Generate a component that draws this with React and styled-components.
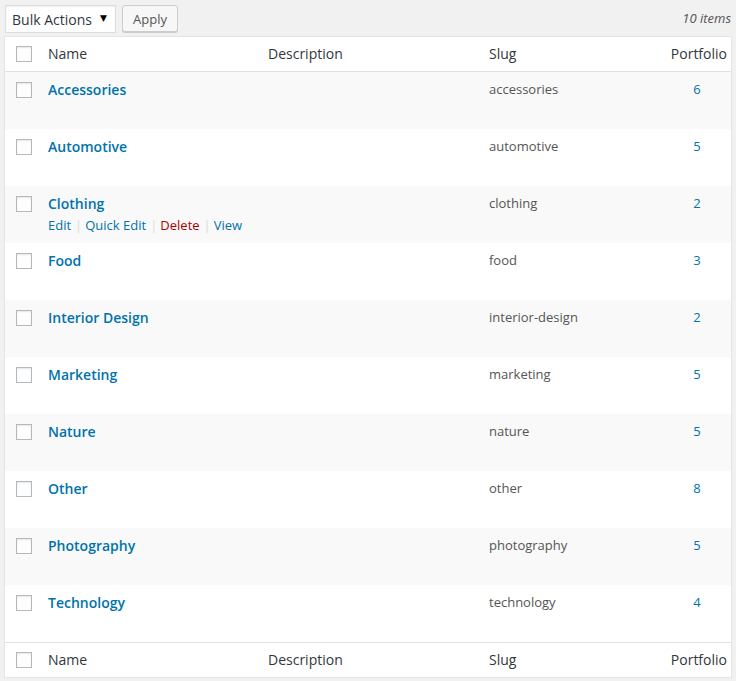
import React from 'react';
import styled, { createGlobalStyle } from 'styled-components';

const GlobalStyle = createGlobalStyle`
  html, body {
    margin: 0;
    padding: 0;
    background: #f1f1f1;
    font-family: "Open Sans", "Liberation Sans", sans-serif;
    color: #444;
  }
`;

const terms = [
  { name: 'Accessories', slug: 'accessories', count: 6 },
  { name: 'Automotive', slug: 'automotive', count: 5 },
  { name: 'Clothing', slug: 'clothing', count: 2, hover: true },
  { name: 'Food', slug: 'food', count: 3 },
  { name: 'Interior Design', slug: 'interior-design', count: 2 },
  { name: 'Marketing', slug: 'marketing', count: 5 },
  { name: 'Nature', slug: 'nature', count: 5 },
  { name: 'Other', slug: 'other', count: 8 },
  { name: 'Photography', slug: 'photography', count: 5 },
  { name: 'Technology', slug: 'technology', count: 4 },
];

const Wrap = styled.div`
  padding: 5px 4px 0 4px;
  width: 728px;
`;

const TopNav = styled.div`
  display: flex;
  align-items: flex-start;
  height: 28px;
  margin: 0 0 3px 1px;
`;

const Select = styled.div`
  box-sizing: border-box;
  width: 111px;
  height: 28px;
  padding: 0 8px 0 6px;
  background: #fff;
  border: 1px solid #ddd;
  box-shadow: inset 0 1px 2px rgba(0, 0, 0, 0.07);
  display: flex;
  align-items: center;
  justify-content: space-between;
  font-size: 14px;
  color: #32373c;
`;

const Arrow = styled.span`
  font-size: 9px;
  color: #000;
  font-family: "DejaVu Sans", sans-serif;
  margin-top: -3px;
`;

const Button = styled.div`
  box-sizing: border-box;
  margin-left: 6px;
  height: 27px;
  padding: 0 10px;
  background: #f7f7f7;
  border: 1px solid #ccc;
  border-radius: 3px;
  box-shadow: 0 1px 0 #ccc;
  display: flex;
  align-items: center;
  font-size: 13px;
  color: #555;
`;

const Count = styled.div`
  margin-left: auto;
  margin-right: 1px;
  padding-top: 4px;
  font-size: 13px;
  font-style: italic;
  color: #555;
`;

const Table = styled.div`
  background: #fff;
  border: 1px solid #e5e5e5;
  box-shadow: 0 1px 1px rgba(0, 0, 0, 0.04);
`;

const cols = '33px 220px 221px 184px 68px';

const HeadRow = styled.div`
  display: grid;
  grid-template-columns: ${cols};
  height: 34px;
  border-${p => (p.$foot ? 'top' : 'bottom')}: 1px solid #e1e1e1;
  font-size: 14px;
  color: #32373c;
`;

const HeadCell = styled.div`
  padding: 7px ${p => (p.$right ? '4px' : '10px')} 0 ${p => (p.$right ? '0' : '10px')};
  line-height: 19px;
  white-space: nowrap;
  text-align: ${p => (p.$right ? 'right' : 'left')};
`;

const Row = styled.div`
  display: grid;
  grid-template-columns: ${cols};
  height: 57px;
  background: ${p => (p.$odd ? '#f9f9f9' : '#fff')};
`;

const CheckCell = styled.div`
  padding: ${p => (p.$head ? '9px' : '10px')} 0 0 11px;
`;

const Box = styled.span`
  display: block;
  box-sizing: border-box;
  width: 16px;
  height: 16px;
  background: #fff;
  border: 1px solid #b4b9be;
  box-shadow: inset 0 1px 2px rgba(0, 0, 0, 0.1);
`;

const Cell = styled.div`
  padding: 7px 10px 0;
  font-size: 13px;
  line-height: 21px;
  color: #555;
  text-align: ${p => (p.$center ? 'center' : 'left')};
`;

const Title = styled.a`
  display: block;
  font-size: 14px;
  font-weight: 600;
  line-height: 21px;
  color: #0073aa;
  text-decoration: none;
`;

const Actions = styled.div`
  visibility: ${p => (p.$show ? 'visible' : 'hidden')};
  padding-top: 2px;
  font-size: 13px;
  line-height: 19px;
  white-space: nowrap;
  color: #ddd;
`;

const Action = styled.a`
  color: ${p => (p.$danger ? '#a00' : '#0073aa')};
  text-decoration: none;
`;

const Sep = styled.span`
  margin: 0 3px 0 4px;
  color: #ddd;
`;

const CountLink = styled.a`
  color: #0073aa;
  font-size: 13px;
  text-decoration: none;
`;

const Header = ({ foot }) => (
  <HeadRow $foot={foot}>
    <CheckCell $head>
      <Box />
    </CheckCell>
    <HeadCell>Name</HeadCell>
    <HeadCell>Description</HeadCell>
    <HeadCell>Slug</HeadCell>
    <HeadCell $right>Portfolio</HeadCell>
  </HeadRow>
);

export default function App() {
  return (
    <Wrap>
      <GlobalStyle />
      <TopNav>
        <Select>
          Bulk Actions <Arrow>▼</Arrow>
        </Select>
        <Button>Apply</Button>
        <Count>10 items</Count>
      </TopNav>
      <Table>
        <Header />
        {terms.map((t, i) => (
          <Row key={t.slug} $odd={i % 2 === 0}>
            <CheckCell>
              <Box />
            </CheckCell>
            <Cell>
              <Title>{t.name}</Title>
              <Actions $show={t.hover}>
                <Action>Edit</Action>
                <Sep>|</Sep>
                <Action>Quick Edit</Action>
                <Sep>|</Sep>
                <Action $danger>Delete</Action>
                <Sep>|</Sep>
                <Action>View</Action>
              </Actions>
            </Cell>
            <Cell />
            <Cell>{t.slug}</Cell>
            <Cell $center>
              <CountLink>{t.count}</CountLink>
            </Cell>
          </Row>
        ))}
        <Header foot />
      </Table>
    </Wrap>
  );
}
